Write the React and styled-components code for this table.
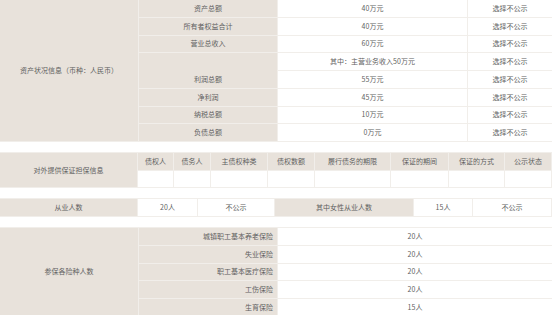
import React from 'react';
import styled, { createGlobalStyle } from 'styled-components';

const Global = createGlobalStyle`
  html, body { margin: 0; padding: 0; background: #fff; }
  body { font-family: "Noto Sans CJK SC", "Noto Sans", sans-serif; }
`;

const LINE = '#f1eeea';
const BEIGE = '#e8e2db';

const Page = styled.div`
  width: 552px;
  display: flex;
  flex-direction: column;
  gap: 10px;
  margin-top: -1px;
`;

const Grid = styled.div`
  display: grid;
  grid-template-columns: ${(p) => p.$cols};
  grid-auto-rows: ${(p) => p.$row};
  gap: 1px;
  background: ${LINE};
  border-right: 1px solid ${LINE};
  border-top: 1px solid ${LINE};
  border-bottom: 1px solid ${LINE};
`;

const Cell = styled.div`
  background: ${(p) => (p.$beige ? BEIGE : '#fff')};
  color: #5f5f5f;
  font-size: 7px;
  line-height: 1;
  display: flex;
  align-items: ${(p) => (p.$bottom ? 'flex-end' : 'center')};
  justify-content: ${(p) => (p.$right ? 'flex-end' : 'center')};
  padding: ${(p) => (p.$bottom ? '0 4px 5px' : '0 4px')};
  white-space: nowrap;
  grid-row: ${(p) => (p.$r ? `${p.$r} / span ${p.$span || 1}` : p.$span ? `span ${p.$span}` : 'auto')};
  grid-column: ${(p) => (p.$col ? p.$col : 'auto')};
`;

const assets = [
  ['资产总额', '40万元'],
  ['所有者权益合计', '40万元'],
  ['营业总收入', '60万元'],
  [null, '其中：主营业务收入50万元'],
  ['利润总额', '55万元'],
  ['净利润', '45万元'],
  ['纳税总额', '10万元'],
  ['负债总额', '0万元'],
];

const guaranteeHeads = ['债权人', '债务人', '主债权种类', '债权数额', '履行债务的期限', '保证的期间', '保证的方式', '公示状态'];

const insurance = [
  ['城镇职工基本养老保险', '20人'],
  ['失业保险', '20人'],
  ['职工基本医疗保险', '20人'],
  ['工伤保险', '20人'],
  ['生育保险', '15人'],
];

export default function App() {
  return (
    <>
      <Global />
      <Page>
        <Grid $cols="138px 138px 189px 84px" $row="16.75px">
          <Cell $beige $r={1} $span={8} $col="1">资产状况信息（币种：人民币）</Cell>
          {assets.map(([k, v], i) => {
            const merged = i > 0 && assets[i - 1][0] === null;
            return (
              <React.Fragment key={i}>
                {k !== null && (
                  <Cell
                    $beige
                    $col="2"
                    $r={merged ? i : i + 1}
                    $span={merged ? 2 : 1}
                    $bottom={merged}
                  >
                    {k}
                  </Cell>
                )}
                <Cell $col="3" $r={i + 1}>{v}</Cell>
                <Cell $col="4" $r={i + 1}>选择不公示</Cell>
              </React.Fragment>
            );
          })}
        </Grid>

        <Grid $cols="137px 35px 36px 56px 46px 75px 57px 55px 46px" $row="16.5px">
          <Cell $beige $span={2} $col="1">对外提供保证担保信息</Cell>
          {guaranteeHeads.map((h) => (
            <Cell $beige key={h}>{h}</Cell>
          ))}
          {guaranteeHeads.map((h) => (
            <Cell key={h + '-v'} />
          ))}
        </Grid>

        <Grid $cols="137px 59px 76px 138px 58px 78px" $row="17px">
          <Cell $beige>从业人数</Cell>
          <Cell>20人</Cell>
          <Cell>不公示</Cell>
          <Cell $beige>其中女性从业人数</Cell>
          <Cell>15人</Cell>
          <Cell>不公示</Cell>
        </Grid>

        <Grid $cols="138px 138px 274px" $row="16.8px">
          <Cell $beige $r={1} $span={5} $col="1">参保各险种人数</Cell>
          {insurance.map(([k, v], i) => (
            <React.Fragment key={k}>
              <Cell $beige $right $col="2" $r={i + 1}>{k}</Cell>
              <Cell $col="3" $r={i + 1}>{v}</Cell>
            </React.Fragment>
          ))}
        </Grid>
      </Page>
    </>
  );
}
